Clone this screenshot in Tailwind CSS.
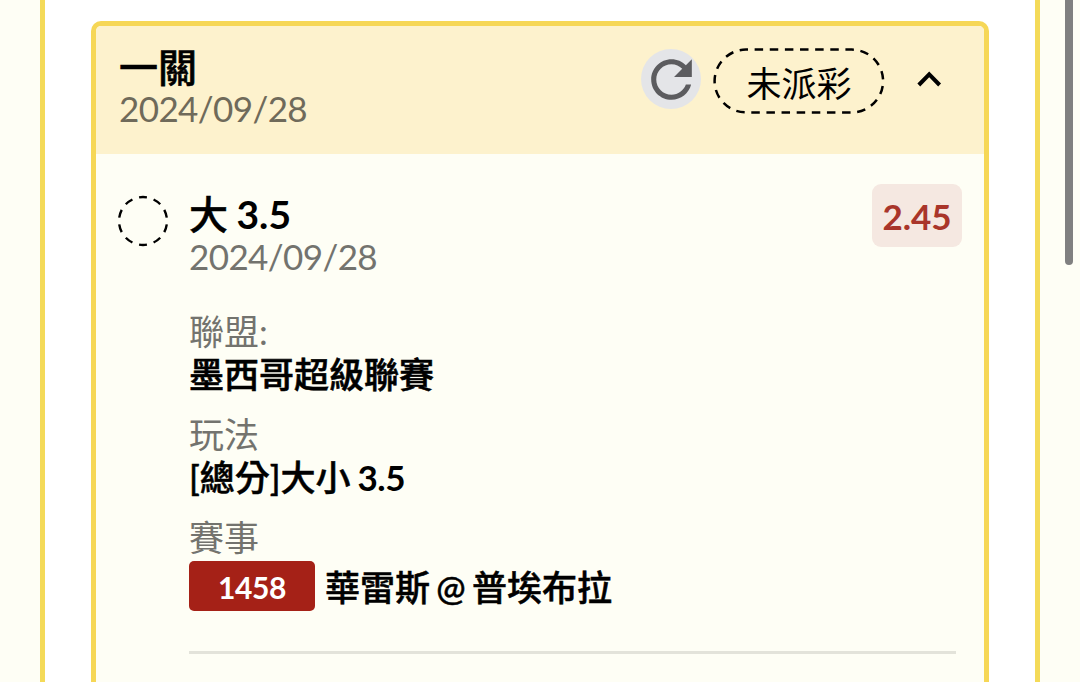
<!DOCTYPE html>
<html lang="zh-Hant">
<head>
    <meta charset="UTF-8">
    <meta name="viewport" content="width=device-width, initial-scale=1.0">
    <title>注單</title>
    <script src="https://cdn.jsdelivr.net/npm/@tailwindcss/browser@4"></script>
</head>
<body class="h-[682px] overflow-hidden bg-[#fefef5] font-[Lato,'Noto_Sans_CJK_TC',sans-serif] text-black">

    <div class="relative h-full overflow-hidden px-10">
        <!-- Outer panel -->
        <div class="h-full border-x-[5px] border-[#f4da58] bg-white pt-[21px] px-[46px]">

            <!-- Bet card -->
            <div class="h-full overflow-hidden rounded-t-[10px] border-x-[5px] border-t-[5px] border-[#f6d756] bg-[#fefef5]">

                <header class="flex h-32 items-start bg-[#fdf2cd] pl-[23px] pr-[42px]">
                    <div class="flex-1 pt-5">
                        <h1 class="h-[43px] text-[39px] leading-[43px] font-medium [-webkit-text-stroke:0.6px_#000]">一關</h1>
                        <p class="-mt-[2px] text-[35px] leading-[42px] tracking-[-0.6px] text-[#6f6a5a]">2024/09/28</p>
                    </div>

                    <button type="button" class="mt-[23px] mr-3 flex size-[60px] items-center justify-center rounded-full bg-[#e4e5e8]">
                        <svg class="size-[61px] shrink-0" viewBox="0 0 24 24" fill="#5c5c5f">
                            <path d="M17.65 6.35C16.2 4.9 14.21 4 12 4c-4.42 0-7.99 3.58-7.99 8s3.57 8 7.99 8c3.73 0 6.84-2.55 7.73-6h-2.08c-.82 2.33-3.04 4-5.65 4-3.31 0-6-2.69-6-6s2.69-6 6-6c1.66 0 3.14.69 4.22 1.78L13 11h7V4l-2.35 2.35z"/>
                        </svg>
                    </button>

                    <div class="mt-[22px] grid h-[66px] w-[172px] place-items-center">
                        <svg class="col-start-1 row-start-1 h-[66px] w-[172px]" viewBox="0 0 172 66" fill="none">
                            <rect x="1.6" y="1.6" width="168.5" height="62.8" rx="31.4" stroke="#000" stroke-width="2.5" stroke-dasharray="8.5 6.63" stroke-dashoffset="6.5"/>
                        </svg>
                        <span class="col-start-1 row-start-1 pt-[4px] text-[35px] leading-[42px]">未派彩</span>
                    </div>

                    <svg class="mt-[43.5px] ml-[31px] h-5 w-[26px]" viewBox="0 0 26 20" fill="none" stroke="#000" stroke-width="4">
                        <path d="M2.8 15L13.2 4.3L23.6 15"/>
                    </svg>
                </header>

                <section class="flex items-start pl-[21px] pr-[22px] pt-[30px]">
                    <svg class="mt-[11px] mr-[20px] size-[52px] shrink-0" viewBox="0 0 52 52" fill="none">
                        <circle cx="26" cy="26" r="24" stroke="#000" stroke-width="2.4" pathLength="100" stroke-dasharray="5.4 4.6" stroke-dashoffset="2.7" transform="rotate(-90 26 26)"/>
                    </svg>

                    <div class="flex-1">
                        <div class="flex items-start justify-between">
                            <div class="pt-[9px]">
                                <h2 class="h-[43px] text-[39px] leading-[43px] font-bold [word-spacing:-1px]"><span class="font-medium [-webkit-text-stroke:0.5px_#000]">大</span> 3.5</h2>
                                <p class="-mt-px text-[35px] leading-[42px] tracking-[-0.6px] text-[#73736e]">2024/09/28</p>
                            </div>
                            <span class="h-[63px] w-[90px] rounded-[9px] bg-[#f5e8e1] text-center text-[35px] leading-[65px] font-bold text-[#a9352a]">2.45</span>
                        </div>

                        <dl class="pt-[33px] pr-[5px] text-[35px] leading-[43px]">
                            <dt class="h-[43px] text-[#73736e]">聯盟:</dt>
                            <dd class="h-[43px] font-medium [-webkit-text-stroke:0.6px_#000]">墨西哥超級聯賽</dd>
                            <dt class="mt-[17px] h-[43px] text-[#73736e]">玩法</dt>
                            <dd class="h-[43px] font-medium [word-spacing:-2px] [-webkit-text-stroke:0.5px_#000]">[總分]大小 <span class="font-bold tracking-[-0.4px] [-webkit-text-stroke:0px]">3.5</span></dd>
                            <dt class="mt-[17px] h-[45px] text-[#73736e]">賽事</dt>
                            <dd class="flex h-[50px] items-center gap-[10px] font-medium">
                                <span class="h-[50px] w-[126px] rounded-[5px] bg-[#a52117] text-center text-[30px] leading-[52px] font-bold tracking-[-0.4px] text-white">1458</span>
                                <span class="pt-[2px] [word-spacing:-2.5px] [-webkit-text-stroke:0.5px_#000]">華雷斯 @ 普埃布拉</span>
                            </dd>
                        </dl>
                        <hr class="mt-[40px] mr-[6px] border-t-[3px] border-[#e3e3da]">
                    </div>
                </section>
            </div>
        </div>

        <!-- Scroll thumb -->
        <div class="absolute top-[-10px] right-[7px] h-[275px] w-2 rounded-full bg-[#808080]"></div>
    </div>

</body>
</html>
